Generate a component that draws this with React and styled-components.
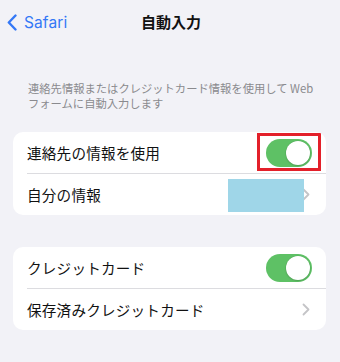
import React from "react";
import styled, { createGlobalStyle } from "styled-components";

const Global = createGlobalStyle`
  html, body { margin: 0; padding: 0; background: #f2f2f7; }
  body { font-family: "Noto Sans CJK JP", "Noto Sans", sans-serif; -webkit-font-smoothing: antialiased; }
`;

const Page = styled.div`
  width: 340px;
  height: 362px;
  background: #f2f2f7;
  display: flex;
  flex-direction: column;
  overflow: hidden;
`;

const NavBar = styled.div`
  position: relative;
  height: 44px;
  display: flex;
  align-items: center;
  justify-content: center;
`;

const Back = styled.div`
  position: absolute;
  left: 7px;
  top: 13px;
  display: flex;
  align-items: center;
  gap: 7px;
  color: #3478f6;
  font-family: "Inter", "Liberation Sans", sans-serif;
  font-size: 15.5px;
  letter-spacing: 0.1px;
`;

const Title = styled.div`
  font-size: 15px;
  font-weight: 600;
  color: #111;
  margin-left: 2px;
  margin-top: -1px;
`;

const Description = styled.div`
  margin: 37px 8px 0 28px;
  font-size: 11.3px;
  line-height: 14.5px;
  color: #8a8a8e;
  letter-spacing: 0;
`;

const Card = styled.div`
  margin: ${(p) => p.$top}px 14px 0 13px;
  background: #fff;
  border-radius: 10px;
  overflow: hidden;
`;

const Row = styled.div`
  position: relative;
  height: 41px;
  display: flex;
  align-items: center;
  padding: 0 14px;
  font-size: 14.6px;
  color: #111;
  letter-spacing: 0.2px;
  & + & {
    border-top: 1px solid #dcdce0;
    margin-left: 14px;
    padding-left: 0;
  }
`;

const Label = styled.div`
  flex: 1;
`;

const Toggle = styled.div`
  width: 46px;
  height: 28px;
  border-radius: 14px;
  background: #5ec165;
  position: relative;
  &::after {
    content: "";
    position: absolute;
    right: 2px;
    top: 2px;
    width: 24px;
    height: 24px;
    border-radius: 50%;
    background: #fff;
    box-shadow: 0 0 0 0.5px rgba(0,0,0,0.08), 0 1px 2px rgba(0,0,0,0.15);
  }
`;

const Highlight = styled.div`
  position: absolute;
  right: 5px;
  top: 1px;
  width: 58px;
  height: 32px;
  border: 3.5px solid #e3202a;
`;

const Mask = styled.div`
  position: absolute;
  right: 22px;
  top: 5px;
  width: 76px;
  height: 33px;
  background: #9fd6e8;
`;

const Chevron = () => (
  <svg width="8" height="13" viewBox="0 0 8 13" style={{ marginRight: 2 }}>
    <path d="M1.5 1.5 L6.5 6.5 L1.5 11.5" fill="none" stroke="#c4c4c7" strokeWidth="1.8" strokeLinecap="round" strokeLinejoin="round" />
  </svg>
);

export default function App() {
  return (
    <Page>
      <Global />
      <NavBar>
        <Back>
          <svg width="10" height="17" viewBox="0 0 10 17">
            <path d="M8.5 1.5 L1.8 8.5 L8.5 15.5" fill="none" stroke="#3478f6" strokeWidth="2.4" strokeLinecap="round" strokeLinejoin="round" />
          </svg>
          <span>Safari</span>
        </Back>
        <Title>自動入力</Title>
      </NavBar>
      <Description>
        連絡先情報またはクレジットカード情報を使用して Web<br />フォームに自動入力します
      </Description>
      <Card $top={22}>
        <Row>
          <Label>連絡先の情報を使用</Label>
          <Toggle />
          <Highlight />
        </Row>
        <Row>
          <Label>自分の情報</Label>
          <Mask />
          <Chevron />
        </Row>
      </Card>
      <Card $top={32}>
        <Row>
          <Label>クレジットカード</Label>
          <Toggle />
        </Row>
        <Row>
          <Label>保存済みクレジットカード</Label>
          <Chevron />
        </Row>
      </Card>
    </Page>
  );
}
